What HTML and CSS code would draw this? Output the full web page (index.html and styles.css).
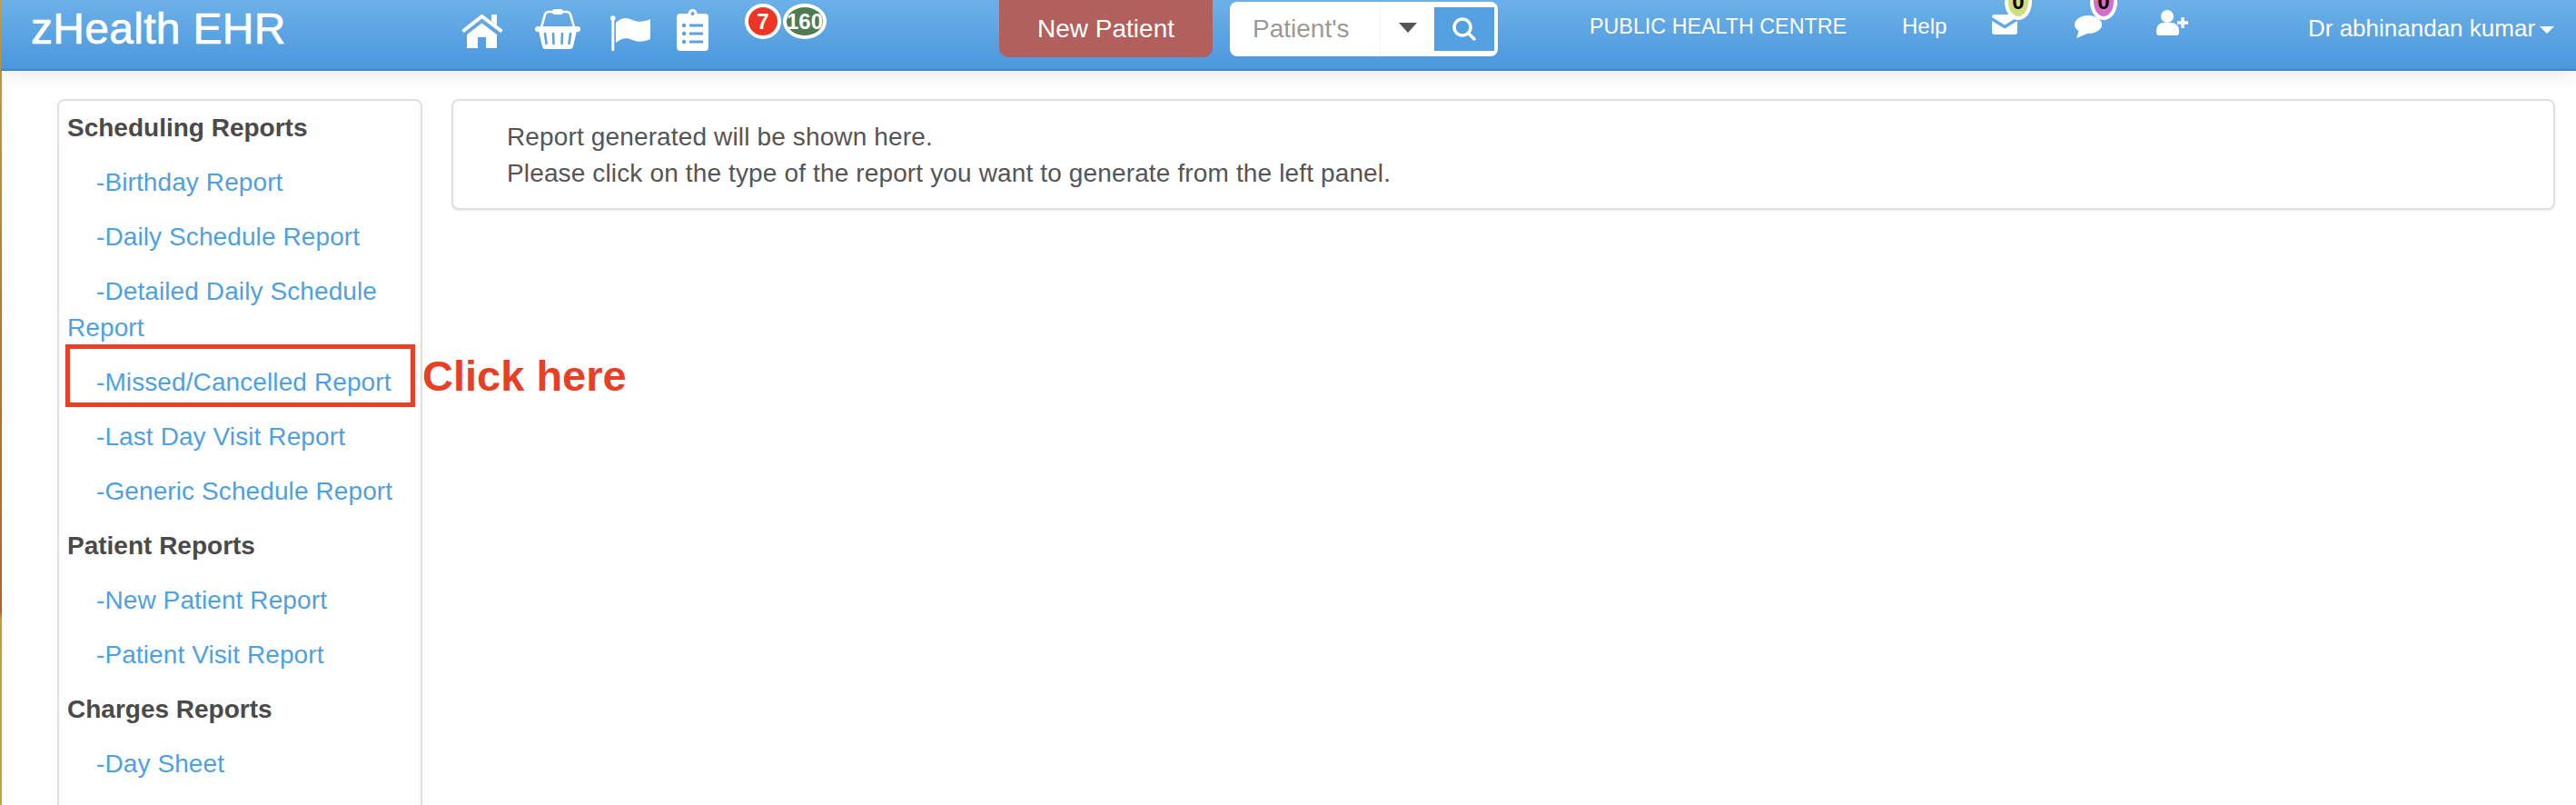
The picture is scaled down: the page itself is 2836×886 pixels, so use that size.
FILE: index.html
```html
<!DOCTYPE html>
<html>
<head>
<meta name="viewport" content="width=device-width, initial-scale=1">
<title>Reports</title>
<link rel="stylesheet" href="styles.css">
</head>
<body>

<div class="page">

  <div class="header">
    <span class="brand">zHealth EHR</span>

    <svg class="icon home" width="46" height="37" viewBox="0 0 46 37">
      <path d="M33 0h6v12l-6-5z" fill="#fff"/>
      <path d="M1.500 18.500L22.500 2l22 16.500" fill="none" stroke="#fff" stroke-width="4"/>
      <path d="M22.500 9.500L39 22v15H27V25h-9v12H6V22z" fill="#fff"/>
    </svg>
    <svg class="icon basket" width="50" height="44" viewBox="0 0 50 44">
      <path d="M7 20L11 6q1-3 4-3h20q3 0 4 3l4 14" fill="none" stroke="#fff" stroke-width="2.600"/>
      <rect x="19" y="0" width="12" height="6" rx="3" fill="#fff"/>
      <rect x="0" y="19" width="50" height="6" rx="3" fill="#fff"/>
      <path d="M4 24h42l-4 17q-.7 3-3.500 3h-27q-3 0-3.500-3z" fill="#fff"/>
      <path d="M11 27l1.500 11M20 27l.5 11M30 27l-.5 11M39 27l-1.500 11" fill="none" stroke="#5aa2e2" stroke-width="2.600" stroke-linecap="round"/>
    </svg>
    <svg class="icon flag" width="44" height="39" viewBox="0 0 44 39">
      <circle cx="2.800" cy="3" r="2.800" fill="#fff"/>
      <rect x="1.300" y="3" width="3" height="36" rx="1" fill="#fff"/>
      <path d="M6 8C12 2 18 2 24 5c7 3 13 2 20-1v22c-7 3-13 4-20 1-6-3-12-2-18 3z" fill="#fff"/>
    </svg>
    <svg class="icon clip" width="35" height="46" viewBox="0 0 35 46">
      <rect x="0" y="5" width="35" height="41" rx="4" fill="#fff"/>
      <circle cx="17.500" cy="5" r="5" fill="#fff"/>
      <circle cx="17.500" cy="5" r="2" fill="#5aa2e2"/>
      <g fill="#5aa2e2">
        <circle cx="8" cy="18" r="2.200"/><rect x="14" y="16.500" width="15" height="3"/>
        <circle cx="8" cy="27" r="2.200"/><rect x="14" y="25.500" width="15" height="3"/>
        <circle cx="8" cy="36" r="2.200"/><rect x="14" y="34.500" width="15" height="3"/>
      </g>
    </svg>

    <span class="count red">7</span>
    <span class="count green">160</span>

    <span class="newBtn">New Patient</span>

    <div class="search">
      <span class="searchType">Patient's</span>
      <span class="searchCaret"><span class="caretDark"></span></span>
      <span class="searchBtn">
        <svg width="28" height="28" viewBox="0 0 28 28">
          <circle cx="12" cy="12" r="9" fill="none" stroke="#fff" stroke-width="3.500"/>
          <path d="M18.500 18.500L25 25" stroke="#fff" stroke-width="3.500" stroke-linecap="round"/>
        </svg>
      </span>
    </div>

    <span class="topLink centre">PUBLIC HEALTH CENTRE</span>
    <span class="topLink help">Help</span>

    <span class="msg mail">
      <svg width="28" height="22" viewBox="0 0 28 22">
        <path d="M1 0h26l1 3-14 8.500L0 3z" fill="#fff"/>
        <path d="M0 7l14 8.500L28 7v12q0 3-3 3H3q-3 0-3-3z" fill="#fff"/>
      </svg>
      <span class="dot lime">0</span>
    </span>
    <span class="msg chat">
      <svg width="30" height="25" viewBox="0 0 30 25">
        <ellipse cx="15" cy="10" rx="15" ry="10" fill="#fff"/>
        <path d="M5 16L2 25l12-5z" fill="#fff"/>
      </svg>
      <span class="dot pink">0</span>
    </span>
    <svg class="icon userAdd" width="35" height="28" viewBox="0 0 35 28">
      <circle cx="12" cy="7" r="7" fill="#fff"/>
      <path d="M0 23c0-6 4-9 8-9h8c5 0 9 3 9 9v2q0 3-3 3H3q-3 0-3-3z" fill="#fff"/>
      <path d="M29 8v12M23 14h12" stroke="#fff" stroke-width="3.400"/>
    </svg>

    <span class="userName">Dr abhinandan kumar</span>
    <span class="caretWhite"></span>
  </div>

  <div class="content">
    <div class="sidePanel">
      <div class="sideHead">Scheduling Reports</div>
      <a class="sideLink">-Birthday Report</a>
      <a class="sideLink">-Daily Schedule Report</a>
      <a class="sideLink">-Detailed Daily Schedule Report</a>
      <a class="sideLink">-Missed/Cancelled Report</a>
      <a class="sideLink">-Last Day Visit Report</a>
      <a class="sideLink">-Generic Schedule Report</a>
      <div class="sideHead">Patient Reports</div>
      <a class="sideLink">-New Patient Report</a>
      <a class="sideLink">-Patient Visit Report</a>
      <div class="sideHead">Charges Reports</div>
      <a class="sideLink">-Day Sheet</a>
    </div>

    <div class="reportPanel">
      <p>Report generated will be shown here.</p>
      <p>Please click on the type of the report you want to generate from the left panel.</p>
    </div>
  </div>

  <!-- annotation over the screenshot -->
  <div class="markBox"></div>
  <div class="markText">Click here</div>

</div>

</body>
</html>
```

FILE: styles.css
```css
* {
  box-sizing: border-box;
}

html, body {
  margin: 0;
  height: 100%;
  overflow: hidden;
}

/* Thin coloured strip down the left edge */
body {
  font-family: "Liberation Sans", Arial, sans-serif;
  color: #555;
  background: linear-gradient(to bottom, #c9a23c 0, #b9762f 40%, #b4622c 76%, #c79a38 77%, #c9a23c 100%);
  padding-left: 2px;
}

.page {
  position: relative;
  height: 100%;
  background: #fff;
}

/* Style the header */
.header {
  display: flex;
  align-items: flex-start;
  height: 78px;
  margin-left: -1px;
  background: linear-gradient(to bottom, #6cb0e8, #4a97dd);
  border-bottom: 2px solid #4186ca;
  box-shadow: 0 4px 20px rgba(0, 0, 0, 0.09);
  color: #fff;
}

.brand {
  margin: 4px 0 0 33px;
  width: 278px;
  font-size: 48px;
  line-height: 56px;
  letter-spacing: 0.3px;
  -webkit-text-stroke: 0.7px #fff;
  white-space: nowrap;
}

.icon {
  flex: none;
}

.home { margin: 16px 0 0 196px; }
.basket { margin: 10px 0 0 35px; }
.flag { margin: 17px 0 0 33px; }
.clip { margin: 10px 0 0 29px; }
.userAdd { margin: 11px 0 0 60px; }

/* Round counters next to the icons */
.count {
  height: 39px;
  margin-top: 4px;
  border: 4px solid #fff;
  border-radius: 50%;
  text-align: center;
  font-size: 24px;
  font-weight: bold;
  line-height: 31px;
  flex: none;
}

.red {
  width: 40px;
  margin-left: 40px;
  background: #ee3424;
}

.green {
  width: 48px;
  margin-left: 2px;
  background: #4f7a52;
}

.newBtn {
  width: 235px;
  height: 63px;
  margin-left: 190px;
  background: #b1605d;
  border-radius: 0 0 10px 10px;
  text-align: center;
  font-size: 28px;
  line-height: 63px;
  flex: none;
}

/* Search box */
.search {
  display: flex;
  width: 295px;
  height: 60px;
  margin: 2px 0 0 19px;
  padding: 6px 4px 6px 0;
  background: #fff;
  border-radius: 8px;
  flex: none;
}

.searchType {
  width: 166px;
  padding-left: 25px;
  border-right: 1px solid #f5f5f5;
  margin: -6px 0;
  color: #999;
  font-size: 28px;
  line-height: 60px;
}

.searchCaret {
  display: flex;
  align-items: center;
  justify-content: center;
  width: 59px;
}

.caretDark {
  border-top: 11px solid #555;
  border-left: 10px solid transparent;
  border-right: 10px solid transparent;
  margin-top: -4px;
}

.searchBtn {
  display: flex;
  align-items: center;
  justify-content: center;
  width: 66px;
  background: #55a0e2;
}

.topLink {
  font-size: 23.300px;
  line-height: 28px;
  margin-top: 15px;
  white-space: nowrap;
  flex: none;
}

.centre {
  margin-left: 101px;
  width: 284px;
}

.help {
  margin-left: 60px;
  width: 49px;
  font-size: 24px;
}

/* Mail and chat icons with their badges */
.msg {
  position: relative;
  display: block;
  flex: none;
}

.msg svg {
  display: block;
}

.mail {
  width: 28px;
  margin: 16px 0 0 50px;
}

.chat {
  width: 30px;
  margin: 17px 0 0 63px;
}

.dot {
  position: absolute;
  width: 30px;
  height: 40px;
  border: 4px solid #fff;
  border-radius: 50%;
  color: #000;
  text-align: center;
  font-size: 24px;
  font-weight: bold;
  line-height: 32px;
}

.lime {
  left: 14px;
  top: -34px;
  background: #cfe07b;
}

.pink {
  left: 17px;
  top: -35px;
  background: #d56ecb;
}

.userName {
  margin: 16px 0 0 132px;
  width: 251px;
  font-size: 26px;
  line-height: 30px;
  white-space: nowrap;
  flex: none;
}

.caretWhite {
  margin: 29px 0 0 4px;
  border-top: 8px solid #fff;
  border-left: 8px solid transparent;
  border-right: 8px solid transparent;
  flex: none;
}

/* Two panels under the header */
.content {
  display: flex;
  align-items: flex-start;
  gap: 32px;
  height: 808px;
  padding: 31px 23px 0 61px;
  overflow: hidden;
}

.sidePanel {
  width: 402px;
  min-height: 900px;
  padding: 0 6px 0 9px;
  border: 2px solid #e0e0e0;
  border-radius: 8px;
  font-size: 28px;
  line-height: 40px;
  letter-spacing: 0.1px;
  flex: none;
}

.sideHead {
  padding: 10px 0;
  font-weight: bold;
  letter-spacing: 0;
  color: #4a4a4a;
}

.sideLink {
  display: block;
  padding: 10px 0;
  text-indent: 32px;
  color: #4f9fe3;
}

.reportPanel {
  flex: 1;
  height: 122px;
  padding: 20px 59px;
  border: 2px solid #e0e0e0;
  border-radius: 8px;
  box-shadow: 0 1px 2px rgba(0, 0, 0, 0.08);
  font-size: 28px;
  line-height: 40px;
  letter-spacing: 0.14px;
}

.reportPanel p {
  margin: 0;
}

/* Red annotation */
.markBox {
  position: absolute;
  left: 70px;
  top: 379px;
  width: 385px;
  height: 69px;
  border: 5px solid #e93f26;
}

.markText {
  position: absolute;
  left: 463px;
  top: 386px;
  color: #e93f26;
  font-size: 47px;
  font-weight: bold;
  line-height: 56px;
}
```
